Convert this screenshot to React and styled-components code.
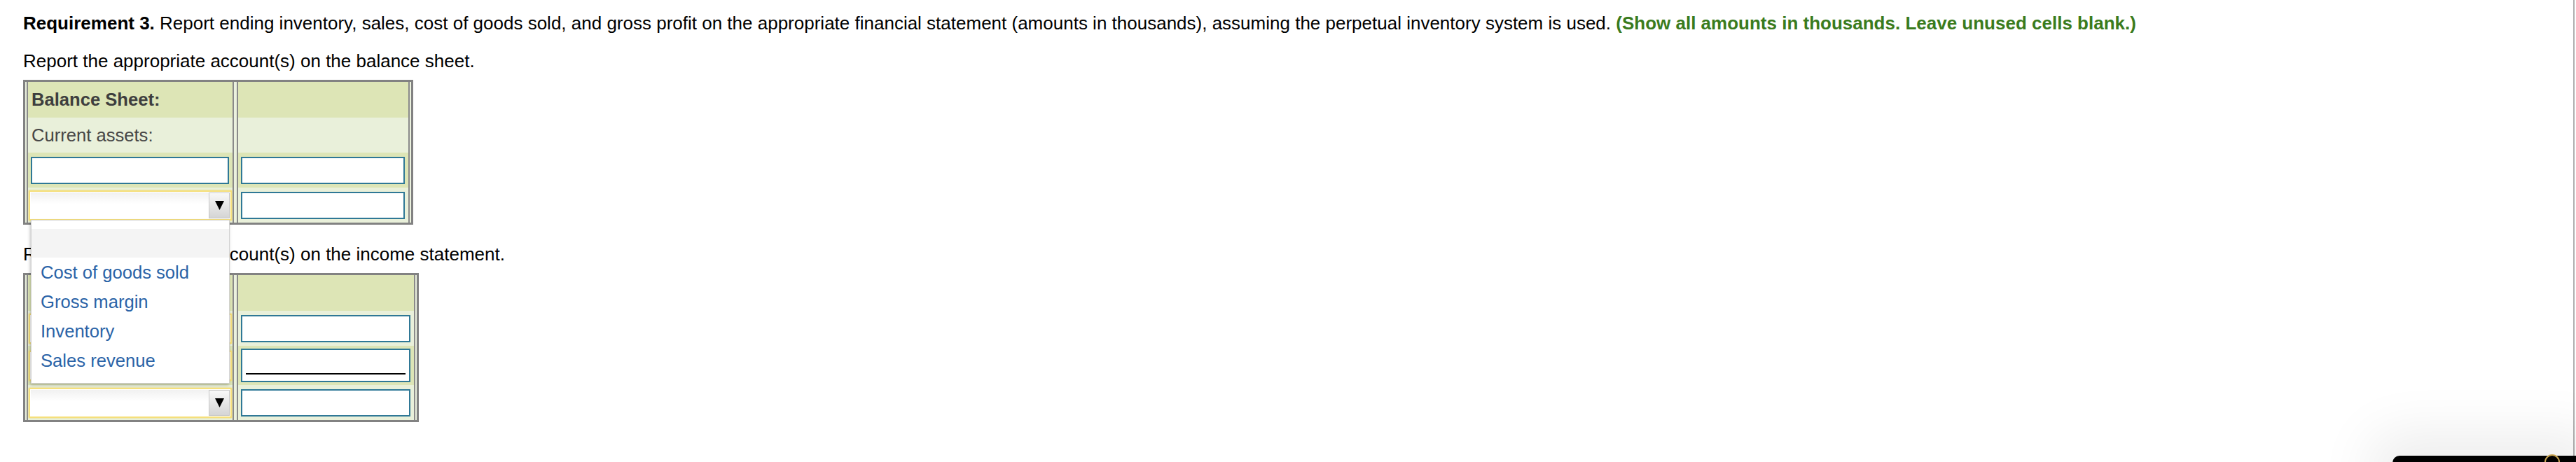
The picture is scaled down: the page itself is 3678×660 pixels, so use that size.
import React from "react";
import styled, { createGlobalStyle } from "styled-components";

/* ===== Global ===== */
const GlobalStyle = createGlobalStyle`
  html, body {
    margin: 0;
    padding: 0;
    background: #ffffff;
  }
  body {
    font-family: "Liberation Sans", Arial, Helvetica, sans-serif;
  }
`;

/* ===== Page text ===== */
const Page = styled.div`
  padding: 18px 0 0 33px;
  font-size: 26px;
  color: #000;
`;

const Instruction = styled.p`
  margin: 0;
  line-height: 30px;
  white-space: nowrap;
`;

const Lead = styled.strong`
  font-weight: bold;
`;

const Hint = styled.strong`
  font-weight: bold;
  color: #3a7b1d;
`;

const Prompt = styled.p`
  margin: ${(p) => p.$top}px 0 0;
  line-height: 30px;
  white-space: nowrap;
`;

/* ===== Worksheet table ===== */
const Sheet = styled.div`
  display: flex;
  width: fit-content;
  margin-top: ${(p) => p.$top}px;
  border: 3px solid #828282;
  background: #ebf1de;
  padding: 0 2px;
  gap: 4px;
`;

const Column = styled.div`
  display: flex;
  flex-direction: column;
  width: ${(p) => p.$w}px;
  border-left: 2px solid #8a8a8a;
  border-right: 2px solid #8a8a8a;
`;

const Cell = styled.div`
  height: ${(p) => p.$h || 50}px;
  box-sizing: border-box;
  display: flex;
  align-items: center;
  padding: ${(p) => (p.$picker ? "0 1px" : "0 5px 0 4px")};
  background: ${(p) => (p.$shade ? "#dde5b6" : "#e9f0da")};
  color: #444;
  font-size: 25.6px;
`;

const Label = styled.span`
  padding-left: 1px;
  font-weight: ${(p) => (p.$bold ? "bold" : "normal")};
  color: ${(p) => (p.$bold ? "#3e3e3e" : "#464646")};
`;

const Field = styled.input`
  flex: 1;
  min-width: 0;
  height: ${(p) => p.$h || 39}px;
  box-sizing: border-box;
  margin: 0;
  padding: 0 6px;
  border: 2px solid #2f7896;
  border-radius: 0;
  outline: none;
  font: inherit;
  background-color: #fff;
  background-image: ${(p) =>
    p.$total ? "linear-gradient(#000, #000)" : "none"};
  background-repeat: no-repeat;
  background-size: calc(100% - 10px) 2px;
  background-position: 5px calc(100% - 9px);
`;

/* ===== Dropdown ===== */
const Picker = styled.div`
  position: relative;
  flex: 1;
  height: 43px;
  box-sizing: border-box;
  display: flex;
  padding: 1px;
  border: 2px solid #f5df7b;
  box-shadow: 0 0 2px #efd46a;
  background: #fff;
`;

const PickerValue = styled.div`
  flex: 1;
  background: linear-gradient(#f1f1f1, #ffffff 45%);
`;

const PickerArrow = styled.div`
  width: 30px;
  box-sizing: border-box;
  display: flex;
  align-items: center;
  justify-content: center;
  border: 1px solid #c6c6c6;
  background: linear-gradient(#f8f8f8, #d5d5d5);
`;

const Menu = styled.ul`
  position: absolute;
  z-index: 10;
  top: calc(100% + 1px);
  left: 1px;
  width: 284px;
  margin: 0;
  padding: 12px 0 11px;
  list-style: none;
  box-sizing: border-box;
  background: #fff;
  border: 1px solid #d2d2d2;
  box-shadow: -1px 2px 4px rgba(0, 0, 0, 0.25);
  font-size: 25.6px;
`;

const Option = styled.li`
  height: ${(p) => (p.$blank ? 41 : 42)}px;
  line-height: 42px;
  padding-left: 13px;
  background: ${(p) => (p.$blank ? "#f4f4f4" : "transparent")};
  color: #2a63a7;
  white-space: nowrap;
`;

/* ===== Overlay at the bottom edge ===== */
const EdgeRule = styled.div`
  position: fixed;
  top: 0;
  left: 3674px;
  width: 2px;
  height: 651px;
  background: #b0b0b0;
`;

const Dock = styled.div`
  position: fixed;
  left: 3416px;
  right: 0;
  top: 651px;
  height: 40px;
  background: #000;
  border-top-left-radius: 10px;
  box-shadow: 0 0 80px 30px rgba(0, 0, 0, 0.08);
`;

const DockBadge = styled.div`
  position: absolute;
  left: 217px;
  top: -2px;
  width: 22px;
  height: 22px;
  box-sizing: border-box;
  border-radius: 50%;
  border: 2px solid #c9a451;
`;

/* ===== Parts ===== */
function Arrow() {
  return (
    <PickerArrow>
      <svg width="13" height="14" viewBox="0 0 13 14">
        <polygon points="0,1 13,1 6.5,14" fill="#000" />
      </svg>
    </PickerArrow>
  );
}

function Dropdown({ open }) {
  return (
    <Picker>
      <PickerValue />
      <Arrow />
      {open && (
        <Menu>
          <Option $blank />
          <Option>Cost of goods sold</Option>
          <Option>Gross margin</Option>
          <Option>Inventory</Option>
          <Option>Sales revenue</Option>
        </Menu>
      )}
    </Picker>
  );
}

export default function App() {
  return (
    <>
      <GlobalStyle />
      <Page>
        <Instruction>
          <Lead>Requirement 3.</Lead> Report ending inventory, sales, cost of
          goods sold, and gross profit on the appropriate financial statement
          (amounts in thousands), assuming the perpetual inventory system is
          used. <Hint>(Show all amounts in thousands. Leave unused cells blank.)</Hint>
        </Instruction>

        <Prompt $top={24}>Report the appropriate account(s) on the balance sheet.</Prompt>

        <Sheet $top={12}>
          <Column $w={292}>
            <Cell $h={51} $shade>
              <Label $bold>Balance Sheet:</Label>
            </Cell>
            <Cell>
              <Label>Current assets:</Label>
            </Cell>
            <Cell $shade>
              <Field />
            </Cell>
            <Cell $picker>
              <Dropdown open />
            </Cell>
          </Column>
          <Column $w={243}>
            <Cell $h={51} $shade />
            <Cell />
            <Cell $shade>
              <Field />
            </Cell>
            <Cell>
              <Field />
            </Cell>
          </Column>
        </Sheet>

        <Prompt $top={27}>Report the appropriate account(s) on the income statement.</Prompt>

        <Sheet $top={12}>
          <Column $w={292}>
            <Cell $h={51} $shade />
            <Cell $picker>
              <Dropdown />
            </Cell>
            <Cell $h={56} $shade $picker>
              <Dropdown />
            </Cell>
            <Cell $picker>
              <Dropdown />
            </Cell>
          </Column>
          <Column $w={251}>
            <Cell $h={51} $shade />
            <Cell>
              <Field />
            </Cell>
            <Cell $h={56} $shade>
              <Field $h={48} $total />
            </Cell>
            <Cell>
              <Field />
            </Cell>
          </Column>
        </Sheet>
      </Page>

      <EdgeRule />
      <Dock>
        <DockBadge />
      </Dock>
    </>
  );
}
